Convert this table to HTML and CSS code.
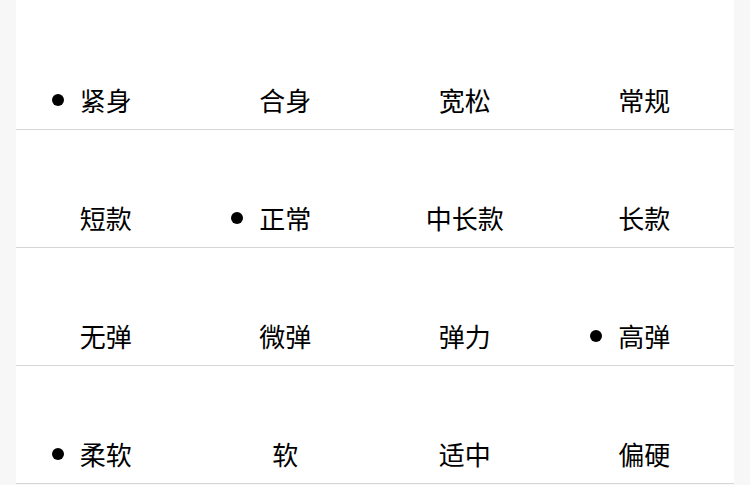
FILE: index.html
```html
<!DOCTYPE html>
<html lang="zh-CN">
<head>
<meta charset="utf-8">
<link rel="stylesheet" href="styles.css">
</head>
<body>
<div class="panel">
  <div class="row">
    <div class="cell"><span class="opt on">紧身</span></div>
    <div class="cell"><span class="opt">合身</span></div>
    <div class="cell"><span class="opt">宽松</span></div>
    <div class="cell"><span class="opt">常规</span></div>
  </div>
  <div class="row">
    <div class="cell"><span class="opt">短款</span></div>
    <div class="cell"><span class="opt on">正常</span></div>
    <div class="cell"><span class="opt">中长款</span></div>
    <div class="cell"><span class="opt">长款</span></div>
  </div>
  <div class="row">
    <div class="cell"><span class="opt">无弹</span></div>
    <div class="cell"><span class="opt">微弹</span></div>
    <div class="cell"><span class="opt">弹力</span></div>
    <div class="cell"><span class="opt on">高弹</span></div>
  </div>
  <div class="row">
    <div class="cell"><span class="opt on">柔软</span></div>
    <div class="cell"><span class="opt">软</span></div>
    <div class="cell"><span class="opt">适中</span></div>
    <div class="cell"><span class="opt">偏硬</span></div>
  </div>
</div>
</body>
</html>
```
FILE: styles.css
```css
html, body {
  margin: 0;
  padding: 0;
  background: #f7f7f7;
}
body {
  font-family: "Noto Sans CJK SC", "Noto Sans", sans-serif;
  color: #000;
}
.panel {
  margin: 0 16px;
  background: #fff;
  padding-top: 12px;
}
.row {
  display: grid;
  grid-template-columns: repeat(4, 1fr);
  height: 117px;
  border-bottom: 1px solid #d6d6d6;
  align-items: end;
}
.cell {
  text-align: center;
  padding-bottom: 11px;
}
.opt {
  position: relative;
  display: inline-block;
  font-size: 26px;
  line-height: 36px;
}
.opt.on::before {
  content: "";
  position: absolute;
  right: calc(100% + 16px);
  top: 50%;
  width: 12px;
  height: 12px;
  margin-top: -6px;
  border-radius: 50%;
  background: #000;
}
```
